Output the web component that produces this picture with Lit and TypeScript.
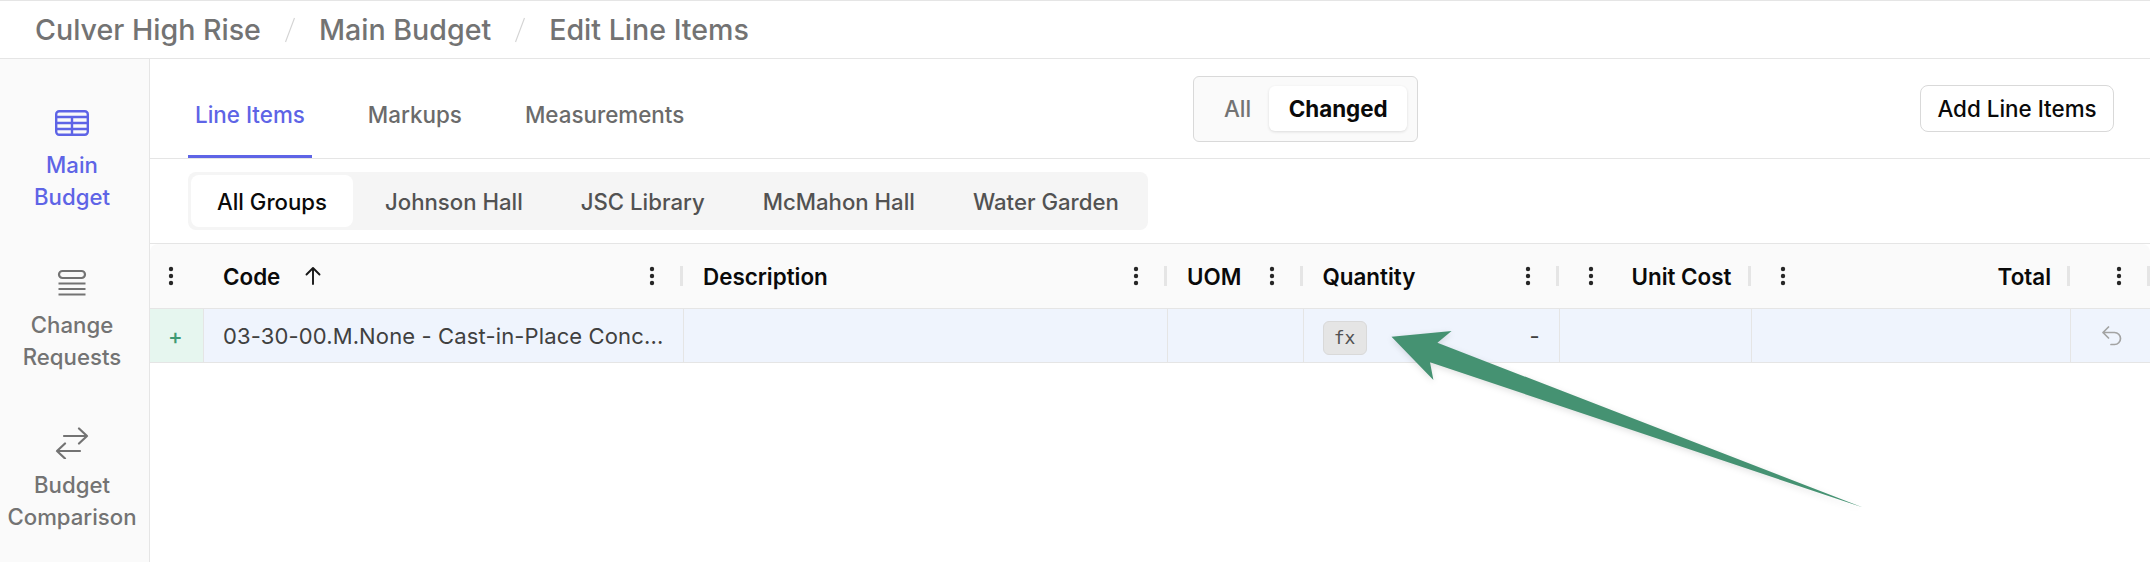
import { LitElement, html, css, svg } from 'lit';
import { customElement } from 'lit/decorators.js';

const dots = html`<svg class="dots" width="24" height="24" viewBox="0 0 24 24"><circle cx="12" cy="5" r="2.2"/><circle cx="12" cy="12" r="2.2"/><circle cx="12" cy="19" r="2.2"/></svg>`;

const tableIcon = svg`<svg width="36" height="28" viewBox="0 0 36 28" fill="none" stroke="currentColor" stroke-width="2.4">
  <rect x="2.2" y="2.2" width="31.6" height="23.6" rx="3"/>
  <path d="M2 8h32M2 14h32M2 20h32M18 8v18"/>
</svg>`;

const changeIcon = svg`<svg width="30" height="28" viewBox="0 0 30 28" fill="none" stroke="currentColor" stroke-width="2.2" stroke-linecap="round">
  <rect x="2" y="2" width="26" height="7" rx="3.5"/>
  <path d="M1.5 14.5h27M1.500 20h27M1.500 25.5h27" stroke-linecap="butt"/>
</svg>`;

const compareIcon = svg`<svg width="34" height="32" viewBox="0 0 34 32" fill="none" stroke="currentColor" stroke-width="2.2" stroke-linecap="round" stroke-linejoin="round">
  <path d="M9 9h23M24 1.500 32 9l-8 7.500M25 24H2M10 16.500 2 24l8 7.500"/>
</svg>`;

const undoIcon = html`<svg class="undo" width="20" height="20" viewBox="0 0 20 20" fill="none" stroke="currentColor" stroke-width="1.7" stroke-linecap="round" stroke-linejoin="round">
  <path d="M6.500 1 1 6.500 6.500 12M1 6.500h11.500a6 6 0 0 1 0 12H9"/>
</svg>`;

interface NavItem { lines: string[]; icon: unknown; active?: boolean; }

const NAV: NavItem[] = [
  { lines: ['Main', 'Budget'], icon: tableIcon, active: true },
  { lines: ['Change', 'Requests'], icon: changeIcon },
  { lines: ['Budget', 'Comparison'], icon: compareIcon },
];

const GROUPS = ['All Groups', 'Johnson Hall', 'JSC Library', 'McMahon Hall', 'Water Garden'];

@customElement('app-root')
export class AppRoot extends LitElement {
  static styles = css`
    :host {
      display: block;
      height: 100vh;
      font-family: Inter, 'Liberation Sans', sans-serif;
      color: #0a0a0a;
      background: #fff;
      overflow: hidden;
    }

    .page {
      position: relative;
      height: 100%;
      display: flex;
      flex-direction: column;
      box-sizing: border-box;
      border-top: 1px solid #e5e5e5;
    }

    .crumbs {
      flex: none;
      height: 57px;
      box-sizing: content-box;
      border-bottom: 1px solid #e5e5e5;
      display: flex;
      align-items: center;
      padding-left: 35px;
      font-size: 28.6px;
      font-weight: 500;
      color: #737373;
      white-space: nowrap;
    }

    .slash {
      width: 58px;
      display: flex;
      justify-content: center;
    }

    .body {
      flex: 1;
      display: flex;
      min-height: 0;
    }

    .side {
      flex: none;
      box-sizing: border-box;
      width: 150px;
      border-right: 1px solid #e5e5e5;
      background: #fafafa;
      padding: 48px 5px 0 0;
      display: flex;
      flex-direction: column;
      gap: 54px;
      color: #737373;
    }

    .nav {
      display: flex;
      flex-direction: column;
      align-items: center;
      gap: 10px;
      font-size: 22.2px;
      font-weight: 500;
      line-height: 32px;
      text-align: center;
    }

    .nav.active {
      color: #5e64e6;
    }

    .nav-icon {
      height: 32px;
      display: flex;
      align-items: center;
      justify-content: center;
    }

    .main {
      flex: 1;
      min-width: 0;
      display: flex;
      flex-direction: column;
    }

    .bar {
      flex: none;
      height: 99px;
      border-bottom: 1px solid #e5e5e5;
      padding: 0 36px 0 38px;
      display: flex;
      align-items: center;
      justify-content: space-between;
    }

    .tabs {
      align-self: stretch;
      display: flex;
      gap: 49px;
    }

    .tab {
      display: flex;
      align-items: center;
      padding: 14px 7px 0;
      border-bottom: 3px solid transparent;
      font-size: 22.4px;
      font-weight: 500;
      color: #6b6b6b;
    }

    .tab.active {
      color: #5e64e6;
      border-bottom-color: #5e64e6;
    }

    .toggle {
      box-sizing: border-box;
      width: 225px;
      height: 66px;
      border: 1px solid #d9d9d9;
      border-radius: 6px;
      background: #fafafa;
      display: flex;
      align-items: center;
      justify-content: flex-end;
      padding-right: 10px;
      font-size: 22.4px;
      font-weight: 500;
      color: #737373;
    }

    .toggle .off {
      padding-right: 18px;
    }

    .toggle .on {
      width: 138px;
      height: 45px;
      display: flex;
      align-items: center;
      justify-content: center;
      background: #fff;
      border-radius: 6px;
      color: #0a0a0a;
      font-weight: 700;
      box-shadow: 0 1px 3px rgba(0, 0, 0, 0.12);
    }

    .add {
      box-sizing: border-box;
      width: 194px;
      height: 47px;
      border: 1px solid #d9d9d9;
      border-radius: 8px;
      background: #fff;
      display: flex;
      align-items: center;
      justify-content: center;
      font-size: 22.4px;
      font-weight: 500;
    }

    .groups-row {
      flex: none;
      height: 84px;
      box-sizing: border-box;
      padding: 13px 0 0 38px;
    }

    .groups {
      display: inline-flex;
      height: 58px;
      box-sizing: border-box;
      padding: 3px;
      gap: 6px;
      border-radius: 8px;
      background: #f5f5f5;
      font-size: 22.2px;
      font-weight: 500;
      color: #525252;
    }

    .group {
      display: flex;
      align-items: center;
      padding: 0 26px;
      border-radius: 8px;
    }

    .group.active {
      background: #fff;
      color: #0a0a0a;
    }

    .table {
      border-top: 1px solid #e5e5e5;
    }

    .head,
    .row {
      display: grid;
      grid-template-columns: 54px 480px 484px 135.5px 256px 192.5px 319px 1fr;
    }

    .head {
      height: 64px;
      background: #fafafa;
      border-radius: 8px 8px 0 0;
      font-size: 22.4px;
      font-weight: 600;
      border-bottom: 1px solid #e5e5e5;
    }

    .hcell {
      display: flex;
      align-items: center;
      padding: 0 1px 0 19px;
      min-width: 0;
      white-space: nowrap;
    }

    .hcell.first {
      padding-left: 9px;
    }

    .hcell.last {
      padding-right: 0;
    }

    .hcell .label {
      flex: 1;
    }

    .hcell .label.right {
      text-align: right;
    }

    .hcell .label.gap {
      padding-left: 29px;
    }

    .hcell .spacer {
      flex: 1;
    }

    .dots {
      flex: none;
      fill: #262626;
      display: block;
    }

    .sep {
      flex: none;
      width: 3px;
      height: 20px;
      margin-left: 16px;
      background: #e5e5e5;
    }

    .sort {
      flex: none;
      margin-left: 24px;
      display: block;
      margin-right: auto;
    }

    .row {
      height: 53px;
      background: #eff4fd;
      border-bottom: 1px solid #e5e5e5;
      font-size: 22px;
      color: #404040;
    }

    .cell {
      display: flex;
      align-items: center;
      min-width: 0;
      padding: 0 19px;
      border-right: 1px solid #e5e5e5;
      box-sizing: border-box;
    }

    .cell:last-child {
      border-right: none;
    }

    .cell.add-mark {
      background: #e6f6ef;
      color: #3f9a73;
      padding: 0 0 0 18px;
      font-weight: 500;
    }

    .code {
      white-space: nowrap;
      letter-spacing: 0.13px;
    }

    .cell.qty {
      justify-content: space-between;
    }

    .fx {
      box-sizing: border-box;
      width: 44px;
      height: 34px;
      margin-top: 4px;
      display: flex;
      align-items: center;
      justify-content: center;
      background: #e5e5e5;
      border: 1px solid #d9d9d9;
      border-radius: 6px;
      font-family: 'DejaVu Sans Mono', 'Liberation Mono', monospace;
      font-size: 18px;
      color: #525252;
    }

    .cell.actions {
      padding: 0 0 0 31px;
    }

    .undo {
      color: #a3a3a3;
      display: block;
    }

    .arrow {
      position: absolute;
      left: 0;
      top: -1px;
      pointer-events: none;
      filter: drop-shadow(0 2px 3px rgba(0, 0, 0, 0.12));
    }
  `;

  private renderNav(item: NavItem) {
    return html`
      <div class="nav ${item.active ? 'active' : ''}">
        <div class="nav-icon">${item.icon}</div>
        <div>${item.lines.map((l) => html`<div>${l}</div>`)}</div>
      </div>
    `;
  }

  render() {
    return html`
      <div class="page">
        <div class="crumbs">
          <span>Culver High Rise</span>
          <span class="slash"><svg width="12" height="28" viewBox="0 0 12 28"><path d="M10.5 2 1.5 26" stroke="#d4d4d4" stroke-width="1.2"/></svg></span>
          <span>Main Budget</span>
          <span class="slash"><svg width="12" height="28" viewBox="0 0 12 28"><path d="M10.5 2 1.5 26" stroke="#d4d4d4" stroke-width="1.2"/></svg></span>
          <span>Edit Line Items</span>
        </div>
        <div class="body">
          <aside class="side">${NAV.map((n) => this.renderNav(n))}</aside>
          <div class="main">
            <div class="bar">
              <div class="tabs">
                <div class="tab active">Line Items</div>
                <div class="tab">Markups</div>
                <div class="tab">Measurements</div>
              </div>
              <div class="toggle">
                <span class="off">All</span>
                <span class="on">Changed</span>
              </div>
              <div class="add">Add Line Items</div>
            </div>
            <div class="groups-row">
              <div class="groups">
                ${GROUPS.map((g, i) => html`<div class="group ${i === 0 ? 'active' : ''}">${g}</div>`)}
              </div>
            </div>
            <div class="table">
              <div class="head">
                <div class="hcell first">${dots}</div>
                <div class="hcell">
                  <span>Code</span>
                  <svg class="sort" width="18" height="20" viewBox="0 0 18 20" fill="none" stroke="#171717" stroke-width="1.9" stroke-linecap="round" stroke-linejoin="round"><path d="M9 18V2M2.500 8.500 9 2l6.500 6.500"/></svg>
                  ${dots}<span class="sep"></span>
                </div>
                <div class="hcell"><span class="label">Description</span>${dots}<span class="sep"></span></div>
                <div class="hcell"><span class="label">UOM</span>${dots}<span class="sep"></span></div>
                <div class="hcell"><span class="label">Quantity</span>${dots}<span class="sep"></span></div>
                <div class="hcell">${dots}<span class="label gap">Unit Cost</span><span class="sep"></span></div>
                <div class="hcell">${dots}<span class="label right">Total</span><span class="sep"></span></div>
                <div class="hcell last"><span class="spacer"></span>${dots}<span class="sep"></span></div>
              </div>
              <div class="row">
                <div class="cell add-mark">+</div>
                <div class="cell"><span class="code">03-30-00.M.None - Cast-in-Place Conc...</span></div>
                <div class="cell"></div>
                <div class="cell"></div>
                <div class="cell qty"><span class="fx">fx</span><span>-</span></div>
                <div class="cell"></div>
                <div class="cell"></div>
                <div class="cell actions">${undoIcon}</div>
              </div>
            </div>
          </div>
        </div>
        <svg class="arrow" width="2150" height="562" viewBox="0 0 2150 562">
          <path d="M1391.500 336.700 1451.600 331 1437.400 342.700 1863 507.500 1430 362.300 1433.400 380Z" fill="#459272"/>
        </svg>
      </div>
    `;
  }
}
